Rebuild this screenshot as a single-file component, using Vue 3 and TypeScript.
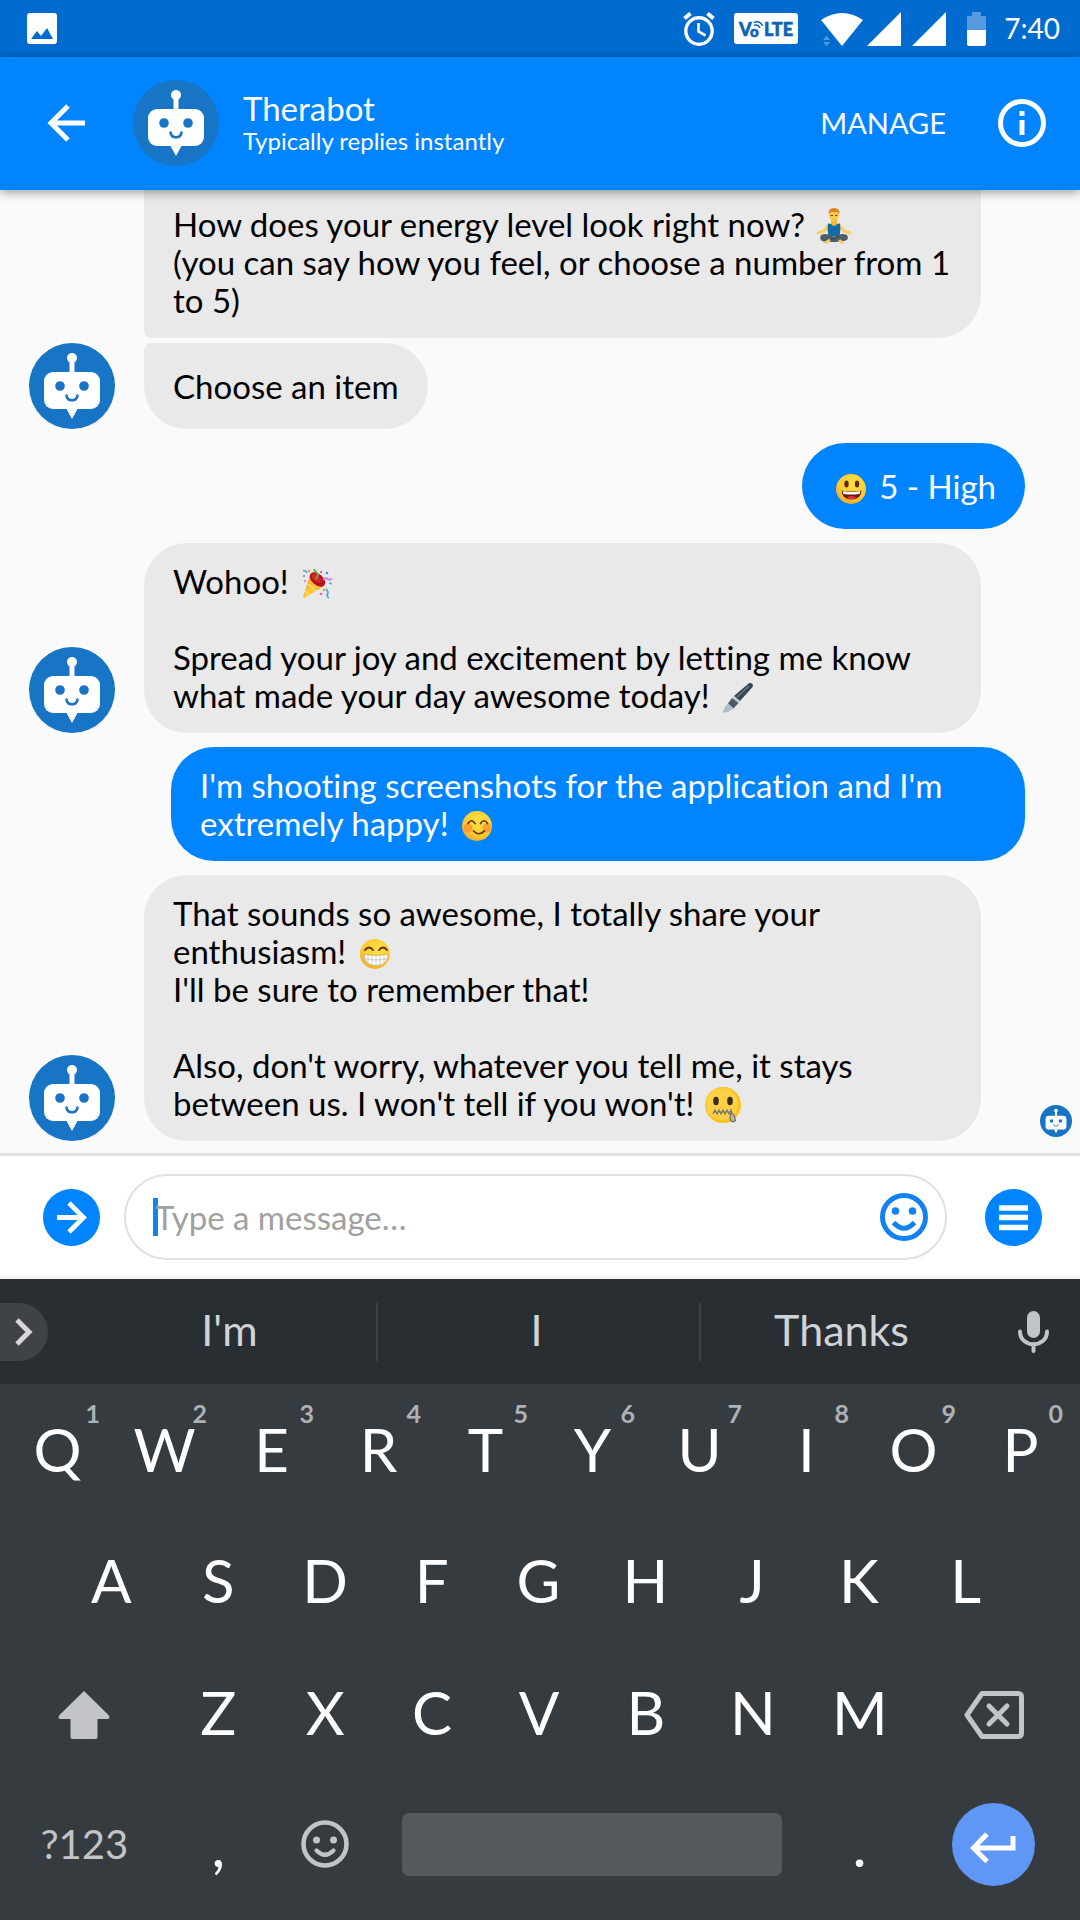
<script setup lang="ts">
import { ref } from 'vue'

interface Part {
  text?: string
  emoji?: string
  label?: string
  large?: boolean
}

interface Message {
  id: number
  from: 'bot' | 'me'
  avatar?: boolean
  shape?: 'continued' | 'last' | 'short'
  parts: Part[]
}

const messages: Message[] = [
  {
    id: 1,
    from: 'bot',
    shape: 'continued',
    parts: [
      { text: 'How does your energy level look right now? ' },
      { emoji: 'lotus', label: 'man meditating', large: true },
      { text: '\n(you can say how you feel, or choose a number from 1 to 5)' },
    ],
  },
  { id: 2, from: 'bot', shape: 'last', avatar: true, parts: [{ text: 'Choose an item' }] },
  {
    id: 3,
    from: 'me',
    shape: 'short',
    parts: [{ emoji: 'smile', label: 'smiling face' }, { text: ' 5 - High' }],
  },
  {
    id: 4,
    from: 'bot',
    avatar: true,
    parts: [
      { text: 'Wohoo! ' },
      { emoji: 'party', label: 'party popper' },
      { text: '\n\nSpread your joy and excitement by letting me know what made your day awesome today! ' },
      { emoji: 'pen', label: 'pen' },
    ],
  },
  {
    id: 5,
    from: 'me',
    parts: [
      { text: "I'm shooting screenshots for the application and I'm extremely happy! " },
      { emoji: 'blush', label: 'blushing face' },
    ],
  },
  {
    id: 6,
    from: 'bot',
    avatar: true,
    parts: [
      { text: 'That sounds so awesome, I totally share your enthusiasm! ' },
      { emoji: 'grin', label: 'grinning face' },
      {
        text: "\nI'll be sure to remember that!\n\nAlso, don't worry, whatever you tell me, it stays between us. I won't tell if you won't! ",
      },
      { emoji: 'zipper', label: 'zipper-mouth face', large: true },
    ],
  },
]

const draft = ref('')
const suggestions: string[] = ["I'm", 'I', 'Thanks']
const topRow: string[] = [...'QWERTYUIOP']
const midRow: string[] = [...'ASDFGHJKL']
const lowRow: string[] = [...'ZXCVBNM']

function press(key: string): void {
  draft.value += key
}
</script>

<template>
  <div class="screen">
    <svg class="sprites" aria-hidden="true">
      <defs>
        <symbol id="bot" viewBox="0 0 86 86">
          <circle cx="43" cy="43" r="43" fill="#1875c5" />
          <circle cx="43" cy="15" r="5" fill="#fff" />
          <path d="M43 15v16" stroke="#fff" stroke-width="5" />
          <rect x="15" y="29" width="56" height="37" rx="9" fill="#fff" />
          <path d="M37 65h12l-6 11z" fill="#fff" />
          <circle cx="31" cy="43" r="4.800" fill="#1875c5" />
          <circle cx="55" cy="43" r="4.800" fill="#1875c5" />
          <path d="M37.500 52.500c1 6.500 10 6.500 11 0" fill="none" stroke="#1875c5" stroke-width="2.600" stroke-linecap="round" />
        </symbol>
        <radialGradient id="face" cx="0.600" cy="0.350" r="0.700">
          <stop offset="0" stop-color="#fde047" />
          <stop offset="0.700" stop-color="#fbcb2f" />
          <stop offset="1" stop-color="#f3a52c" />
        </radialGradient>
        <linearGradient id="cone" x1="0" y1="0" x2="1" y2="1">
          <stop offset="0" stop-color="#f79321" />
          <stop offset="0.550" stop-color="#fdc93c" />
          <stop offset="1" stop-color="#f08a1d" />
        </linearGradient>
        <symbol id="smile" viewBox="0 0 30 30">
          <circle cx="15" cy="15" r="15" fill="url(#face)" />
          <ellipse cx="10.500" cy="10" rx="2.200" ry="3.500" fill="#5d2a0c" />
          <ellipse cx="21" cy="10" rx="2.200" ry="3.500" fill="#5d2a0c" />
          <path d="M5.500 16.500q10 2 20 0q-.5 9-10 9t-10-9z" fill="#6b1710" />
          <path d="M6.500 17q9 2 18 0l-1 3q-8 1-16 0z" fill="#fff" />
          <path d="M10 23.500q5.500-3 11 0q-5 3.500-11 0z" fill="#e8323c" />
        </symbol>
        <symbol id="blush" viewBox="0 0 30 30">
          <circle cx="15" cy="15" r="15" fill="url(#face)" />
          <circle cx="6" cy="17" r="4.500" fill="#fb8b2b" opacity="0.700" />
          <circle cx="25" cy="17" r="4.500" fill="#fb8b2b" opacity="0.700" />
          <path d="M6 12.500q3.500-5.500 7 0M18.500 12.500q3.500-5.500 7 0M11.500 20q5 5.500 11 0" fill="none" stroke="#6b3208" stroke-width="1.700" stroke-linecap="round" />
        </symbol>
        <symbol id="grin" viewBox="0 0 30 30">
          <circle cx="15" cy="15" r="15" fill="url(#face)" />
          <path d="M5 11q4-5 8 0M19 11q4-5 8 0" fill="none" stroke="#6b2608" stroke-width="1.900" stroke-linecap="round" />
          <path d="M4 15.500q12 2 24 0q-.5 11-12 11t-12-11z" fill="#fff" stroke="#b9a07c" stroke-width="0.700" />
          <path d="M4.500 20q11.500 2 23 0M8 16v7.500M12 16.500v9M16 16.500v10M20 16.500v9M24 16v7.500" fill="none" stroke="#b8b8b8" stroke-width="0.700" />
        </symbol>
        <symbol id="zipper" viewBox="0 0 36 36">
          <circle cx="18" cy="18" r="18" fill="#fcc21b" />
          <circle cx="17" cy="17" r="16" fill="#fdd045" />
          <ellipse cx="11" cy="14" rx="2.800" ry="4.200" fill="#3b2a20" />
          <ellipse cx="25" cy="14" rx="2.800" ry="4.200" fill="#3b2a20" />
          <path d="M8 27l2-4 2 4 2-4 2 4 2-4 2 4 2-4 2 4 2-4 1 3" fill="none" stroke="#6f6f6c" stroke-width="1.200" />
          <path d="M8 25h19" stroke="#8a857b" stroke-width="1" />
          <path d="M26 26l3 2 1.500 5.500q-2.500 2.500-5 0l-.5-4z" fill="#c5b68f" stroke="#6f6f6c" stroke-width="1.200" />
        </symbol>
        <symbol id="party" viewBox="0 0 30 30">
          <path d="M8.500 5L1 28q-.3 1.500 1.500 1L22 17q-8-2-13.500-12z" fill="url(#cone)" />
          <path d="M3 22l4 4M6 15l8 7" stroke="#fde36d" stroke-width="1.200" />
          <ellipse cx="15.500" cy="10.500" rx="9" ry="5.500" transform="rotate(40 15.500 10.500)" fill="#b3131f" />
          <ellipse cx="14.500" cy="9.500" rx="6" ry="3" transform="rotate(40 14.500 9.500)" fill="#d6262d" />
          <path d="M13 10q5-3 1.500-6.500T13 0" fill="none" stroke="#6ea43a" stroke-width="2" />
          <path d="M1 2q3-1 4 2M27 29q-3-2-1.500-4T24 20M27 14l3 1" fill="none" stroke="#57a7e8" stroke-width="1.800" />
          <path d="M21 11q3-3 5-1t4-1" fill="none" stroke="#c985e8" stroke-width="1.800" />
          <g fill="#ef5fa0"><circle cx="19" cy="3" r="1.200" /><circle cx="3" cy="12" r="1" /><circle cx="19" cy="25" r="1.300" /></g>
          <g fill="#f59a23"><circle cx="7" cy="2" r="1.200" /><circle cx="22" cy="21" r="1.200" /></g>
          <g fill="#4a8fe0"><circle cx="25" cy="4" r="1.300" /><circle cx="2" cy="7" r="1" /></g>
        </symbol>
        <symbol id="pen" viewBox="0 0 30 30">
          <path d="M28 0q3 1 1.500 4L17 18l-6-5L25 1q1.500-1.500 3-1z" fill="#37454f" />
          <path d="M26 3L14 14" stroke="#6b7b86" stroke-width="1.500" />
          <path d="M11 13l6 5-1.500 2-6.500-5z" fill="#b7cbd8" />
          <path d="M9 15l6.500 5-5 5.500-5.500-5z" fill="#4b5b66" />
          <path d="M5 20.500l5.500 5L5 29l-4.500.7L0 29l1.500-4.500z" fill="#a9bfcd" />
        </symbol>
        <symbol id="lotus" viewBox="0 0 36 36">
          <path d="M13 17l-5 6-6 2M23 17l5 6 6 2" fill="none" stroke="#f9cd62" stroke-width="3" stroke-linecap="round" stroke-linejoin="round" />
          <path d="M15 11h6v4l2 3H13l2-3z" fill="#f3b635" />
          <path d="M12 15.500l3 .5q3 4 6 0l3-.5q1 6-.5 13h-11Q11 21 12 15.500z" fill="#0f6ca6" />
          <path d="M5 27q6-3 13 2 7-5 13-2 3 5-3 6l-8 1H10q-8-1-5-7z" fill="#4e5f69" />
          <path d="M12 32q6 0 11-4" fill="none" stroke="#37474f" stroke-width="1" />
          <ellipse cx="18" cy="7" rx="5" ry="6.500" fill="#fbc949" />
          <path d="M12.500 6Q12 0 18 0t5.500 6l-2-2h-7z" fill="#e08324" />
          <path d="M14.500 7.500h2.500M19 7.500h2.500" stroke="#7b4a14" stroke-width="1" />
          <path d="M10 34.500l3-2M26 34.500l-2-1.500" stroke="#f9cd62" stroke-width="3" stroke-linecap="round" />
        </symbol>
      </defs>
    </svg>

    <div class="status">
      <svg width="30" height="31" viewBox="0 0 30 31">
        <rect width="30" height="31" rx="3" fill="#fff" />
        <path d="M4 26l6-8 4 5 6-8 6 11z" fill="#006bcf" />
      </svg>
      <div class="status-right">
        <svg width="32" height="34" viewBox="0 0 32 34" fill="none" stroke="#fff">
          <circle cx="16" cy="19" r="13.200" stroke-width="3.400" />
          <path d="M15.500 11v8.500l7 4" stroke-width="2.600" />
          <path d="M1.500 6.500l6-5M30.500 6.500l-6-5" stroke-width="4" />
        </svg>
        <svg class="volte" width="64" height="31" viewBox="0 0 64 31">
          <rect width="64" height="31" rx="3" fill="#fff" />
          <g fill="#0f63b5" stroke="#0f63b5" stroke-width="0.600" font-family="Lato, sans-serif" font-weight="900">
            <text x="5" y="23" font-size="18">V</text>
            <text x="16" y="24" font-size="15">o</text>
            <text x="30" y="23" font-size="18">LTE</text>
          </g>
          <path d="M20 12.500q4-1.500 6 2.500M20 9.500q6-2.500 8.500 3.500" fill="none" stroke="#0f63b5" stroke-width="1.500" />
        </svg>
        <svg class="wifi" width="42" height="34" viewBox="0 0 42 34">
          <path d="M0 8Q21-6 42 8L21 34z" fill="#fff" />
          <path d="M2 28l3.500-4.500L9 28zM2 30l3.500 4L9 30z" fill="#5499dc" />
        </svg>
        <svg class="signal" width="34" height="34" viewBox="0 0 34 34"><path d="M34 0v34H0z" fill="#fff" /></svg>
        <svg class="signal second" width="34" height="34" viewBox="0 0 34 34"><path d="M34 0v34H0z" fill="#fff" /></svg>
        <svg class="battery" width="19" height="34" viewBox="0 0 19 34">
          <path d="M5 0h9v4h5v14H0V4h5z" fill="#559ade" />
          <path d="M0 18h19v14q0 2-2 2H2q-2 0-2-2z" fill="#fff" />
        </svg>
        <span class="clock">7:40</span>
      </div>
    </div>

    <header class="bar">
      <button class="plain" aria-label="Back">
        <svg width="38" height="38" viewBox="0 0 38 38" fill="none" stroke="#fff" stroke-width="5">
          <path d="M38 19H4M21 2L4 19l17 17" />
        </svg>
      </button>
      <svg class="bar-avatar"><use href="#bot" /></svg>
      <div class="who">
        <h1>Therabot</h1>
        <p>Typically replies instantly</p>
      </div>
      <button class="plain manage">MANAGE</button>
      <button class="plain" aria-label="Info">
        <svg width="48" height="48" viewBox="0 0 48 48">
          <circle cx="24" cy="24" r="21.500" fill="none" stroke="#fff" stroke-width="5" />
          <path d="M24 12v5M24 21v15" stroke="#fff" stroke-width="5" />
        </svg>
      </button>
    </header>

    <main class="chat">
      <div v-for="m in messages" :key="m.id" class="row" :class="[m.from, m.shape]">
        <div v-if="m.from === 'bot'" class="slot">
          <svg v-if="m.avatar" class="avatar"><use href="#bot" /></svg>
        </div>
        <p class="bubble"><template v-for="(p, i) in m.parts" :key="i"><svg v-if="p.emoji" class="emoji" :class="{ large: p.large }" role="img" :aria-label="p.label"><use :href="'#' + p.emoji" /></svg><template v-else>{{ p.text }}</template></template></p>
      </div>
      <svg class="seen"><use href="#bot" /></svg>
    </main>

    <form class="composer" @submit.prevent>
      <button type="button" class="plain" aria-label="More">
        <svg width="57" height="57" viewBox="0 0 57 57">
          <circle cx="28.500" cy="28.500" r="28.500" fill="#0084ff" />
          <path d="M14 28.500h26M26 14l14.500 14.500L26 43" fill="none" stroke="#fff" stroke-width="4.800" />
        </svg>
      </button>
      <div class="field">
        <span class="caret"></span>
        <input v-model="draft" type="text" placeholder="Type a message…" aria-label="Type a message" />
        <button type="button" class="plain" aria-label="Emoji">
          <svg width="48" height="48" viewBox="0 0 48 48" fill="none" stroke="#1282f2">
            <circle cx="24" cy="24" r="21.500" stroke-width="5" />
            <path d="M13.500 29.500q10.500 11.500 21 0" stroke-width="5" />
            <circle cx="15.500" cy="18" r="3.800" fill="#1282f2" stroke="none" />
            <circle cx="32.500" cy="18" r="3.800" fill="#1282f2" stroke="none" />
          </svg>
        </button>
      </div>
      <button type="button" class="plain" aria-label="Menu">
        <svg width="57" height="57" viewBox="0 0 57 57">
          <circle cx="28.500" cy="28.500" r="28.500" fill="#0084ff" />
          <path d="M14 19h29M14 28.500h29M14 38.500h29" stroke="#fff" stroke-width="5.600" />
        </svg>
      </button>
    </form>

    <section class="keyboard" aria-label="Keyboard">
      <div class="suggest">
        <button class="plain more" aria-label="Expand">
          <svg width="18" height="28" viewBox="0 0 18 28" fill="none" stroke="#d5d7da" stroke-width="5"><path d="M2 2l12 12L2 26" /></svg>
        </button>
        <button v-for="s in suggestions" :key="s" class="plain word" @click="press(s)">{{ s }}</button>
        <button class="plain mic" aria-label="Voice input">
          <svg width="31" height="42" viewBox="0 0 31 42">
            <rect x="9" y="0" width="13" height="27" rx="6.500" fill="#c0c3c7" />
            <path d="M2 20.500c0 17 27 17 27 0M15.500 33v7" fill="none" stroke="#c0c3c7" stroke-width="4" stroke-linecap="round" />
          </svg>
        </button>
      </div>
      <div class="keys first">
        <button v-for="(k, i) in topRow" :key="k" class="plain key" @click="press(k)">{{ k }}<sup>{{ (i + 1) % 10 }}</sup></button>
      </div>
      <div class="keys middle">
        <button v-for="k in midRow" :key="k" class="plain key" @click="press(k)">{{ k }}</button>
      </div>
      <div class="keys">
        <button class="plain side lowered" aria-label="Shift">
          <svg width="52" height="48" viewBox="0 0 52 48"><path d="M26 0l24.500 24q2.500 4-1.500 4H39.500v18q0 2-2 2h-23q-2 0-2-2V28H3q-4 0-1.500-4z" fill="#c2c4c7" /></svg>
        </button>
        <button v-for="k in lowRow" :key="k" class="plain key" @click="press(k)">{{ k }}</button>
        <button class="plain side lowered" aria-label="Delete">
          <svg width="60" height="48" viewBox="0 0 60 48" fill="none" stroke="#c2c4c7" stroke-width="5" stroke-linejoin="round">
            <path d="M18 2.500h36q3.500 0 3.500 3.500v36q0 3.500-3.500 3.500H18L3 24z" />
            <path d="M25 15l18 18M43 15L25 33" stroke-linecap="round" />
          </svg>
        </button>
      </div>
      <div class="keys">
        <button class="plain side symbols">?123</button>
        <button class="plain key" @click="press(',')">,</button>
        <button class="plain key" aria-label="Emoji keyboard">
          <svg width="48" height="48" viewBox="0 0 48 48" fill="none" stroke="#c2c4c7">
            <circle cx="24" cy="24" r="21.500" stroke-width="4.600" />
            <path d="M15.500 30.500q8.500 8.500 17 0" stroke-width="4.200" stroke-linecap="round" />
            <circle cx="15.500" cy="20" r="3.500" fill="#c2c4c7" stroke="none" />
            <circle cx="32.500" cy="20" r="3.500" fill="#c2c4c7" stroke="none" />
          </svg>
        </button>
        <button class="plain wide" aria-label="Space" @click="press(' ')"><span class="space"></span></button>
        <button class="plain key" @click="press('.')">.</button>
        <button class="plain side" aria-label="Enter">
          <svg width="83" height="83" viewBox="0 0 83 83">
            <circle cx="41.500" cy="41.500" r="41.500" fill="#5e97f6" />
            <path d="M61 33v12H22M35 31L21.500 45 35 58.500" fill="none" stroke="#fff" stroke-width="5" />
          </svg>
        </button>
      </div>
    </section>
  </div>
</template>

<style>
body {
  margin: 0;
}
</style>

<style scoped>
.screen {
  display: flex;
  flex-direction: column;
  height: 100vh;
  overflow: hidden;
  background: #fafafa;
  font-family: Lato, "Liberation Sans", sans-serif;
  font-variant-ligatures: none;
}
.screen * {
  box-sizing: border-box;
}
svg {
  display: block;
  flex: none;
}
.sprites {
  position: absolute;
  width: 0;
  height: 0;
}
.plain {
  display: flex;
  align-items: center;
  justify-content: center;
  padding: 0;
  border: 0;
  background: none;
  color: inherit;
  font: inherit;
  cursor: pointer;
}

.status {
  display: flex;
  flex: none;
  align-items: center;
  justify-content: space-between;
  height: 57px;
  padding: 0 20px 0 27px;
  background: #006bcf;
  color: #fff;
}
.status-right {
  display: flex;
  align-items: center;
}
.volte {
  margin-left: 19px;
}
.wifi {
  margin-left: 23px;
}
.signal {
  margin-left: 4px;
}
.signal.second {
  margin-left: 11px;
}
.battery {
  margin: 0 18px 0 21px;
}
.clock {
  font-size: 28px;
  line-height: 32px;
  padding-bottom: 2px;
}

.bar {
  display: flex;
  flex: none;
  align-items: center;
  position: relative;
  z-index: 1;
  height: 133px;
  padding: 0 34px 2px 47px;
  background: #0084ff;
  box-shadow: 0 2px 10px rgba(0, 0, 0, 0.4);
  color: #fff;
}
.bar-avatar {
  width: 86px;
  height: 86px;
  margin-left: 48px;
}
.who {
  flex: 1;
  margin-left: 24px;
  padding-bottom: 2px;
}
.who h1,
.who p {
  margin: 0;
  font-weight: 400;
}
.who h1 {
  font-size: 33px;
  line-height: 38px;
}
.who p {
  font-size: 24px;
  line-height: 28px;
}
.manage {
  margin-right: 52px;
  font-size: 29px;
}

.chat {
  display: flex;
  flex: 1;
  flex-direction: column;
  justify-content: flex-end;
  gap: 14px;
  position: relative;
  min-height: 0;
  padding: 0 55px 12px 29px;
  overflow: hidden;
}
.row {
  display: flex;
  flex: none;
  align-items: flex-end;
}
.row.me {
  justify-content: flex-end;
}
.row.continued {
  margin-bottom: -9px;
}
.slot {
  flex: none;
  width: 115px;
}
.avatar {
  width: 86px;
  height: 86px;
}
.bubble {
  min-height: 86px;
  margin: 0;
  padding: 19px 29px;
  border-radius: 43px;
  font-size: 33px;
  line-height: 38px;
  white-space: pre-line;
}
.bot .bubble {
  max-width: 837px;
  background: #e9e9e9;
  color: #000;
}
.me .bubble {
  max-width: 854px;
  background: #0084ff;
  color: #fff;
}
.continued .bubble {
  border-radius: 0 0 43px 8px;
}
.last .bubble,
.short .bubble {
  padding: 24px 29px;
}
.last .bubble {
  border-top-left-radius: 8px;
}
.emoji {
  display: inline-block;
  width: 30px;
  height: 30px;
  margin: 0 5px;
  vertical-align: -5px;
}
.emoji.large {
  width: 36px;
  height: 36px;
  margin: -4px 2px;
  vertical-align: -3px;
}
.seen {
  position: absolute;
  right: 8px;
  bottom: 16px;
  width: 32px;
  height: 32px;
}

.composer {
  display: flex;
  flex: none;
  align-items: center;
  gap: 24px;
  height: 126px;
  padding: 2px 38px 0 43px;
  border-top: 3px solid #e0e0e0;
  border-bottom: 3px solid #f5f5f5;
  background: #fff;
}
.field {
  display: flex;
  flex: 1;
  align-items: center;
  position: relative;
  height: 86px;
  margin-right: 14px;
  padding: 0 17px 0 29px;
  border: 2px solid #e0e0e0;
  border-radius: 43px;
}
.field input {
  flex: 1;
  position: relative;
  min-width: 0;
  height: 48px;
  padding: 0;
  border: 0;
  outline: 0;
  background: none;
  color: #000;
  font: 33px Lato, "Liberation Sans", sans-serif;
}
.field input::placeholder {
  color: #a0a0a0;
  opacity: 1;
}
.caret {
  position: absolute;
  top: 22px;
  left: 27px;
  width: 5px;
  height: 38px;
  background: #1282f2;
}

.keyboard {
  flex: none;
  height: 641px;
  background: #363b3f;
  color: #fff;
}
.suggest {
  display: flex;
  align-items: center;
  height: 105px;
  background: #292e32;
  color: #d0d3d7;
}
.more {
  width: 48px;
  height: 58px;
  margin-right: 39px;
  border-radius: 0 29px 29px 0;
  background: #3f4347;
}
.word {
  flex: 323;
  height: 58px;
  padding: 0 4px 4px 0;
  font-size: 43px;
}
.word:nth-child(2) {
  flex: 290;
}
.word:nth-child(4) {
  flex: 286;
}
.word + .word {
  border-left: 2px solid #3f4347;
}
.mic {
  width: 94px;
}
.keys {
  display: flex;
  height: 132px;
  padding: 0 6px 0 4px;
}
.keys.first {
  height: 130px;
}
.keys.middle {
  padding: 0 61px 0 58px;
}
.key {
  flex: 107;
  position: relative;
  min-width: 0;
  font-size: 60px;
}
.key sup {
  position: absolute;
  top: 14px;
  right: 11px;
  color: #aeb1b5;
  font-size: 25px;
  font-weight: 700;
  line-height: 30px;
}
.side {
  flex: 161;
  min-width: 0;
}
.lowered {
  padding-top: 6px;
}
.wide {
  flex: 428;
  min-width: 0;
}
.space {
  width: 380px;
  height: 63px;
  border-radius: 7px;
  background: #55585d;
}
.symbols {
  color: #c2c4c7;
  font-size: 40px;
}
</style>
